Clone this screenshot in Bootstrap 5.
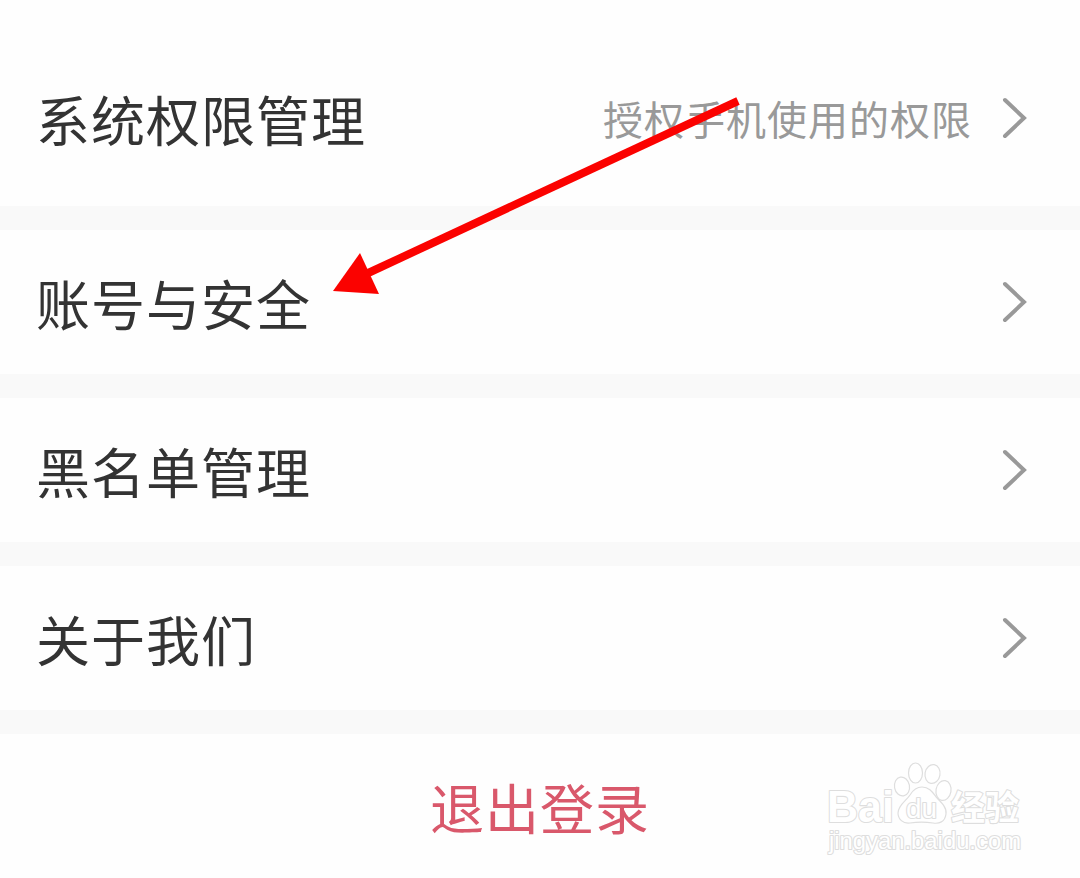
<!DOCTYPE html>
<html lang="zh-CN">
<head>
    <meta charset="UTF-8">
    <meta name="viewport" content="width=device-width, initial-scale=1.0">
    <title>设置</title>
    <link href="https://cdn.jsdelivr.net/npm/bootstrap@5.3.1/dist/css/bootstrap.min.css" rel="stylesheet">
    <style>
        body {
            background-color: #fefefe;
            font-family: "Noto Sans CJK SC", sans-serif;
            height: 878px;
            overflow: hidden;
        }

        .settings .list-group-item {
            height: 168px;
            padding: 0 52px 0 36px;
            background-color: #fefefe;
            border: 0 solid #f9f9f9;
            border-bottom-width: 24px !important;
        }

        .settings .list-group-item:first-child {
            height: 230px;
            padding-top: 46px;
            padding-bottom: 16px;
        }

        .item-name {
            color: #333;
            font-size: 54px;
            line-height: 80px;
            letter-spacing: 1px;
            padding-top: 1px;
        }

        .item-hint {
            color: #999;
            font-size: 40px;
            line-height: 60px;
            letter-spacing: 1px;
            margin-right: 30px;
        }

        .logout {
            height: 144px;
            color: #d9586b;
            font-size: 54px;
            letter-spacing: 1px;
        }

        .arrow {
            left: 0;
            top: 0;
            pointer-events: none;
        }

        .watermark {
            left: 820px;
            top: 755px;
        }

        .watermark text {
            paint-order: stroke;
            stroke-width: 2.2px;
            stroke-linejoin: round;
        }
    </style>
</head>
<body class="position-relative">
    <div class="list-group list-group-flush settings">
        <a href="#" class="list-group-item d-flex align-items-center">
            <span class="item-name me-auto">系统权限管理</span>
            <span class="item-hint">授权手机使用的权限</span>
            <svg width="26" height="42" fill="none" stroke="#999" stroke-width="4" stroke-linecap="round"><path d="M3 3L22 21L3 39"/></svg>
        </a>
        <a href="#" class="list-group-item d-flex align-items-center">
            <span class="item-name me-auto">账号与安全</span>
            <svg width="26" height="42" fill="none" stroke="#999" stroke-width="4" stroke-linecap="round"><path d="M3 3L22 21L3 39"/></svg>
        </a>
        <a href="#" class="list-group-item d-flex align-items-center">
            <span class="item-name me-auto">黑名单管理</span>
            <svg width="26" height="42" fill="none" stroke="#999" stroke-width="4" stroke-linecap="round"><path d="M3 3L22 21L3 39"/></svg>
        </a>
        <a href="#" class="list-group-item d-flex align-items-center">
            <span class="item-name me-auto">关于我们</span>
            <svg width="26" height="42" fill="none" stroke="#999" stroke-width="4" stroke-linecap="round"><path d="M3 3L22 21L3 39"/></svg>
        </a>
    </div>
    <div class="logout d-flex align-items-center justify-content-center">退出登录</div>

    <!-- pointer to the account row -->
    <svg class="arrow position-absolute" width="1080" height="400">
        <path d="M738 101L366 274" stroke="#fb0200" stroke-width="8"/>
        <path d="M333 291L360 253L379 294Z" fill="#fb0200"/>
    </svg>

    <svg class="watermark position-absolute" width="220" height="110" fill="#fff" stroke="#dedede" stroke-width="1.2" font-family="Liberation Sans, sans-serif" font-weight="bold">
        <text x="7" y="67" font-size="45" textLength="67" lengthAdjust="spacingAndGlyphs">Bai</text>
        <ellipse cx="82" cy="31.500" rx="7.500" ry="9.500" transform="rotate(-10 82 31.5)"/>
        <ellipse cx="95.500" cy="18" rx="7" ry="10"/>
        <ellipse cx="112.500" cy="19" rx="7.500" ry="9.500" transform="rotate(10 112.5 19)"/>
        <ellipse cx="123.500" cy="35.500" rx="7.500" ry="10" transform="rotate(10 123.5 35.5)"/>
        <path d="M102 32C110 32 113 38 117 43C122 48 127 53 126 59C125 67 119 69 113 68C106 67 97 67 90 68C83 69 78 64 78 58C78 50 86 46 90 40C93 35 97 32 102 32Z"/>
        <text x="86" y="63" font-size="27" font-weight="normal" textLength="31" lengthAdjust="spacingAndGlyphs">du</text>
        <text x="131" y="65" font-size="34" font-family="Noto Sans CJK SC, sans-serif" textLength="68" lengthAdjust="spacingAndGlyphs">经验</text>
        <text x="9" y="94" font-size="23" font-weight="normal" textLength="192" lengthAdjust="spacingAndGlyphs">jingyan.baidu.com</text>
    </svg>

    <script src="https://cdn.jsdelivr.net/npm/bootstrap@5.3.1/dist/js/bootstrap.bundle.min.js"></script>
</body>
</html>
